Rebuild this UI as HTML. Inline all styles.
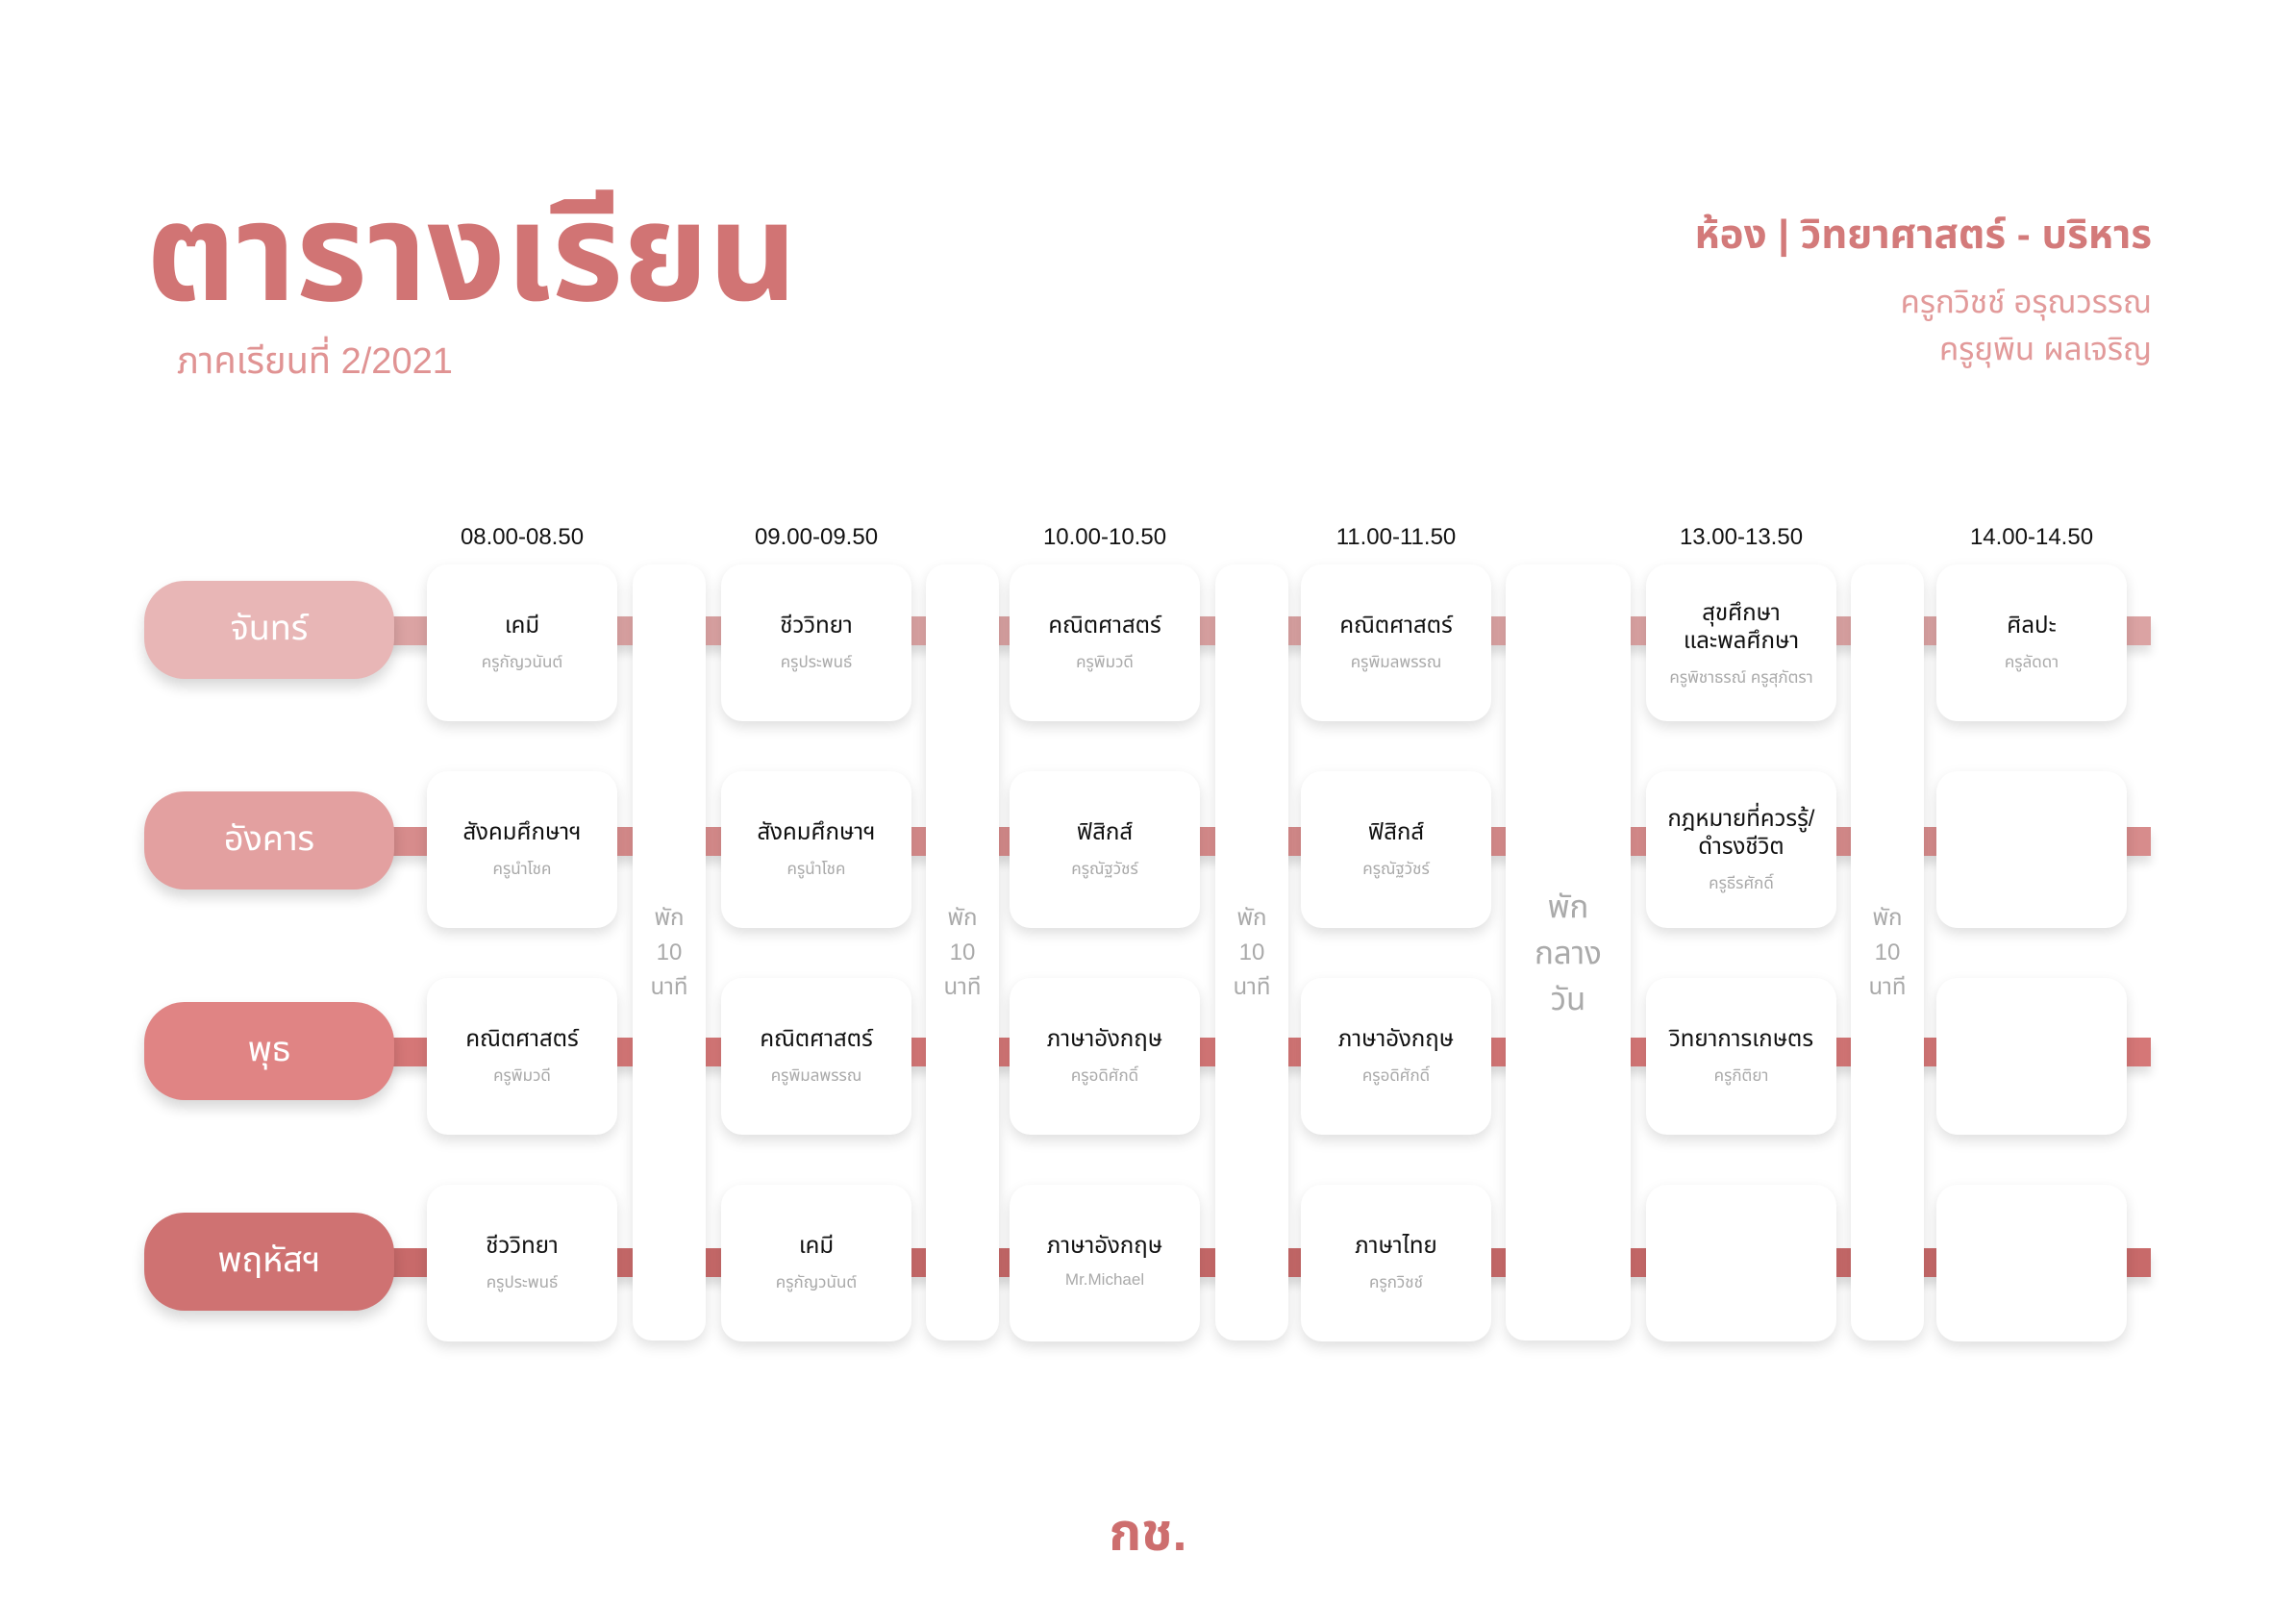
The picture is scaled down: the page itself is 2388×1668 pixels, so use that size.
<!DOCTYPE html>
<html><head><meta charset="utf-8">
<style>
*{margin:0;padding:0;box-sizing:border-box}
body{width:2388px;height:1668px;background:#fff;position:relative;overflow:hidden;font-family:"Liberation Sans","Noto Sans Thai","Noto Sans CJK SC",sans-serif}
.a{position:absolute}
.title{left:152px;top:192px;font-size:143px;font-weight:bold;color:#d17474;line-height:1;white-space:nowrap}
.sub{left:184px;top:349px;font-size:38px;color:#e09393;white-space:nowrap}
.room{right:150px;top:213px;font-size:42px;color:#d37a7a;font-weight:bold;white-space:nowrap;text-align:right}
.tch{right:150px;font-size:33px;color:#e29a9a;white-space:nowrap;text-align:right}
.time{top:545px;font-size:24px;color:#111;text-align:center;width:198px}
.bar{height:30px;left:400px;width:1837px;box-shadow:0 8px 10px rgba(0,0,0,.12)}
.pill{left:150px;width:260px;height:102px;border-radius:42px;color:#fff;font-size:36px;display:flex;align-items:center;justify-content:center;box-shadow:0 8px 14px rgba(0,0,0,.16)}
.card{background:#fff;border-radius:22px;box-shadow:0 6px 14px rgba(0,0,0,.13);text-align:center;height:163px;width:198px}
.brk{background:#fff;border-radius:20px;box-shadow:0 6px 14px rgba(0,0,0,.12);top:587px;height:807px;color:#aaa;text-align:center;display:flex;flex-direction:column;justify-content:center}
.s{font-size:24px;color:#111;line-height:29px}
.t{font-size:17px;color:#aaa;margin-top:11px}
.foot{left:0;width:2388px;top:1556px;text-align:center;font-size:54px;font-weight:bold;color:#cd6e6e}
</style></head><body>
<div class="a title">ตารางเรียน</div>
<div class="a sub">ภาคเรียนที่ 2/2021</div>
<div class="a room">ห้อง | วิทยาศาสตร์ - บริหาร</div>
<div class="a tch" style="top:290px">ครูกวิชช์ อรุณวรรณ</div>
<div class="a tch" style="top:339px">ครูยุพิน ผลเจริญ</div>

<div class="a time" style="left:444px">08.00-08.50</div>
<div class="a time" style="left:750px">09.00-09.50</div>
<div class="a time" style="left:1050px">10.00-10.50</div>
<div class="a time" style="left:1353px">11.00-11.50</div>
<div class="a time" style="left:1712px">13.00-13.50</div>
<div class="a time" style="left:2014px">14.00-14.50</div>

<div class="a bar" style="top:641px;background:#dba3a3"></div>
<div class="a bar" style="top:860px;background:#d78c8c"></div>
<div class="a bar" style="top:1079px;background:#d57777"></div>
<div class="a bar" style="top:1298px;background:#c86a6a"></div>

<div class="a pill" style="top:604px;background:#e8b6b6">จันทร์</div>
<div class="a pill" style="top:823px;background:#e3a0a0">อังคาร</div>
<div class="a pill" style="top:1042px;background:#e08484">พุธ</div>
<div class="a pill" style="top:1261px;background:#cf7272">พฤหัสฯ</div>

<div class="a brk" style="left:658px;width:76px;font-size:24px;line-height:36px">พัก<br>10<br>นาที</div>
<div class="a brk" style="left:963px;width:76px;font-size:24px;line-height:36px">พัก<br>10<br>นาที</div>
<div class="a brk" style="left:1264px;width:76px;font-size:24px;line-height:36px">พัก<br>10<br>นาที</div>
<div class="a brk" style="left:1566px;width:130px;font-size:33px;line-height:48px">พัก<br>กลาง<br>วัน</div>
<div class="a brk" style="left:1925px;width:76px;font-size:24px;line-height:36px">พัก<br>10<br>นาที</div>

<!-- row 1 -->
<div class="a card" style="left:444px;top:587px;padding-top:49px"><div class="s">เคมี</div><div class="t">ครูกัญวนันต์</div></div>
<div class="a card" style="left:750px;top:587px;padding-top:49px"><div class="s">ชีววิทยา</div><div class="t">ครูประพนธ์</div></div>
<div class="a card" style="left:1050px;top:587px;padding-top:49px"><div class="s">คณิตศาสตร์</div><div class="t">ครูพิมวดี</div></div>
<div class="a card" style="left:1353px;top:587px;padding-top:49px"><div class="s">คณิตศาสตร์</div><div class="t">ครูพิมลพรรณ</div></div>
<div class="a card" style="left:1712px;top:587px;padding-top:36px"><div class="s">สุขศึกษา<br>และพลศึกษา</div><div class="t">ครูพิชาธรณ์ ครูสุภัตรา</div></div>
<div class="a card" style="left:2014px;top:587px;padding-top:49px"><div class="s">ศิลปะ</div><div class="t">ครูลัดดา</div></div>
<!-- row 2 -->
<div class="a card" style="left:444px;top:802px;padding-top:49px"><div class="s">สังคมศึกษาฯ</div><div class="t">ครูนำโชค</div></div>
<div class="a card" style="left:750px;top:802px;padding-top:49px"><div class="s">สังคมศึกษาฯ</div><div class="t">ครูนำโชค</div></div>
<div class="a card" style="left:1050px;top:802px;padding-top:49px"><div class="s">ฟิสิกส์</div><div class="t">ครูณัฐวัชร์</div></div>
<div class="a card" style="left:1353px;top:802px;padding-top:49px"><div class="s">ฟิสิกส์</div><div class="t">ครูณัฐวัชร์</div></div>
<div class="a card" style="left:1712px;top:802px;padding-top:35px"><div class="s">กฎหมายที่ควรรู้/<br>ดำรงชีวิต</div><div class="t">ครูธีรศักดิ์</div></div>
<div class="a card" style="left:2014px;top:802px"></div>
<!-- row 3 -->
<div class="a card" style="left:444px;top:1017px;padding-top:49px"><div class="s">คณิตศาสตร์</div><div class="t">ครูพิมวดี</div></div>
<div class="a card" style="left:750px;top:1017px;padding-top:49px"><div class="s">คณิตศาสตร์</div><div class="t">ครูพิมลพรรณ</div></div>
<div class="a card" style="left:1050px;top:1017px;padding-top:49px"><div class="s">ภาษาอังกฤษ</div><div class="t">ครูอดิศักดิ์</div></div>
<div class="a card" style="left:1353px;top:1017px;padding-top:49px"><div class="s">ภาษาอังกฤษ</div><div class="t">ครูอดิศักดิ์</div></div>
<div class="a card" style="left:1712px;top:1017px;padding-top:49px"><div class="s">วิทยาการเกษตร</div><div class="t">ครูกิติยา</div></div>
<div class="a card" style="left:2014px;top:1017px"></div>
<!-- row 4 -->
<div class="a card" style="left:444px;top:1232px;padding-top:49px"><div class="s">ชีววิทยา</div><div class="t">ครูประพนธ์</div></div>
<div class="a card" style="left:750px;top:1232px;padding-top:49px"><div class="s">เคมี</div><div class="t">ครูกัญวนันต์</div></div>
<div class="a card" style="left:1050px;top:1232px;padding-top:49px"><div class="s">ภาษาอังกฤษ</div><div class="t">Mr.Michael</div></div>
<div class="a card" style="left:1353px;top:1232px;padding-top:49px"><div class="s">ภาษาไทย</div><div class="t">ครูกวิชช์</div></div>
<div class="a card" style="left:1712px;top:1232px"></div>
<div class="a card" style="left:2014px;top:1232px"></div>

<div class="a foot">กช.</div>
</body></html>
